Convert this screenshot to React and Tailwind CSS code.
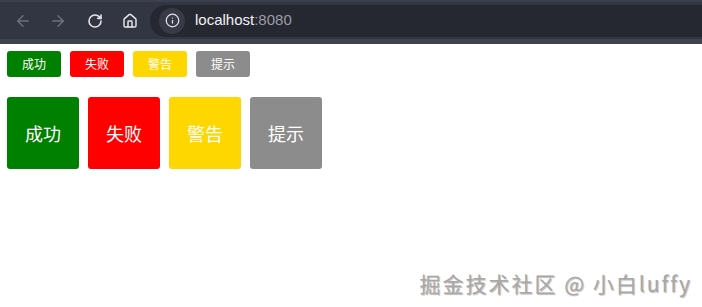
import { ArrowLeft, ArrowRight, RotateCw, House, Info } from 'lucide-react'

const items = [
  { text: '成功', bg: 'bg-[#008000]' },
  { text: '失败', bg: 'bg-[#ff0000]' },
  { text: '警告', bg: 'bg-[#ffd700]' },
  { text: '提示', bg: 'bg-[#8c8c8c]' },
]

export default function App() {
  return (
    <div className="relative h-[307px] w-[702px] overflow-hidden bg-white font-['Noto_Sans_CJK_SC',sans-serif]">
      {/* browser bar */}
      <div className="flex h-[44px] items-center bg-[#323542] border-t-2 border-t-[#3c3f4c] border-b-[5px] border-b-[#41444f]">
        <div className="flex items-center gap-[17px] pl-[14px] text-[#6f727e]">
          <ArrowLeft size={18} strokeWidth={1.8} />
          <ArrowRight size={18} strokeWidth={1.8} />
          <RotateCw size={16} strokeWidth={2.4} className="ml-[3px] text-[#e4e5ea]" />
          <House size={16} strokeWidth={2.2} className="ml-[2px] text-[#e4e5ea]" />
        </div>
        <div className="ml-[12px] flex h-[32px] flex-1 items-center rounded-l-full bg-[#252731] pl-[9px]">
          <div className="flex h-[26px] w-[26px] items-center justify-center rounded-full bg-[#383a45]">
            <Info size={15} strokeWidth={2} className="text-[#e4e5ea]" />
          </div>
          <span className="ml-[10px] font-['Liberation_Sans',sans-serif] text-[15px] text-[#f1f2f5]">
            localhost<span className="text-[#9a9ca6]">:8080</span>
          </span>
        </div>
      </div>

      <div className="flex gap-[9px] px-[7px] pt-[7px]">
        {items.map(i => (
          <div
            key={i.text}
            className={`${i.bg} flex h-[26px] w-[54px] items-center justify-center rounded-[3px] text-[12px] text-white`}
          >
            {i.text}
          </div>
        ))}
      </div>

      <div className="flex gap-[9px] px-[7px] pt-[20px]">
        {items.map(i => (
          <div
            key={i.text}
            className={`${i.bg} flex h-[72px] w-[72px] items-center justify-center rounded-[3px] text-[18px] text-white`}
          >
            {i.text}
          </div>
        ))}
      </div>

      <div className="absolute bottom-[10px] right-[10px] text-[21px] leading-[28px] tracking-[2px] text-[#a8a8a8] [text-shadow:1px_1px_1px_rgba(0,0,0,0.28)]">
        掘金技术社区 @ 小白luffy
      </div>
    </div>
  )
}
